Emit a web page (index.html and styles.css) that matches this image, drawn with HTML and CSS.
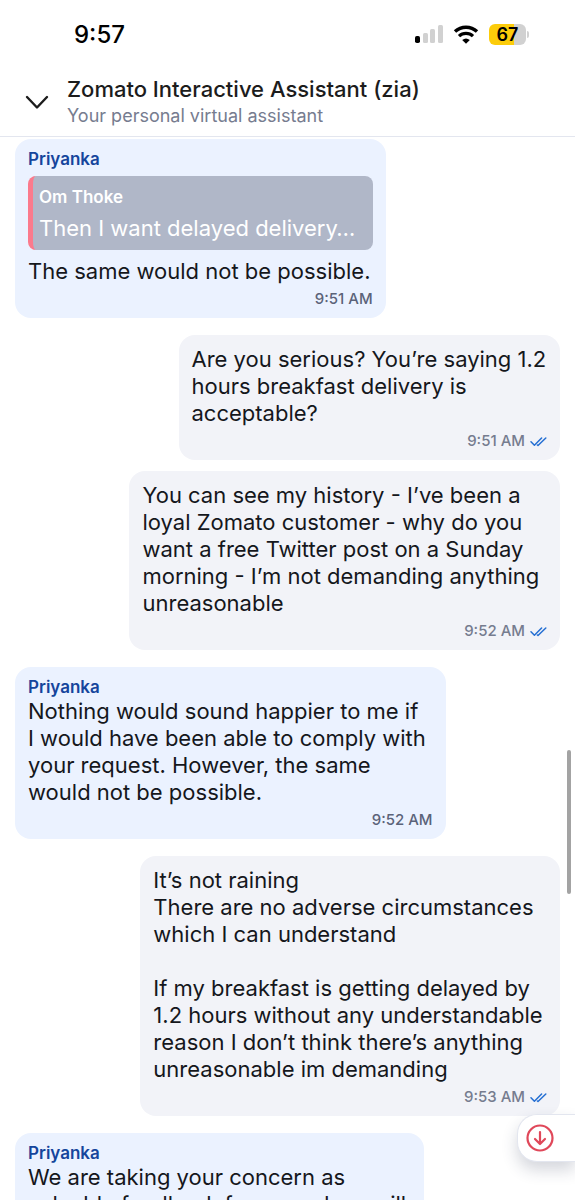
FILE: index.html
```
<!DOCTYPE html>
<html lang="en">
  <head>
    <meta charset="utf-8">
    <meta name="viewport" content="width=device-width, initial-scale=1">
    <title>Zomato Interactive Assistant (zia)</title>
    <link rel="stylesheet" href="styles.css">
  </head>
  <body>
    <svg width="0" height="0" class="defs" aria-hidden="true">
      <symbol id="ticks" viewBox="0 0 17 11">
        <path d="M1 5.8l3.4 3.5L11.6 2M7.4 9l.6.5L15.8 2" fill="none" stroke="#256fd3" stroke-width="1.5" stroke-linecap="round" stroke-linejoin="round"/>
      </symbol>
    </svg>

    <div class="status-bar">
      <span class="clock">9:57</span>
      <div class="status-icons">
        <svg width="28" height="20" viewBox="0 0 28 20" aria-hidden="true">
          <rect x="0" y="12" width="5" height="7" rx="1.8" fill="#000"/>
          <rect x="8" y="9" width="5" height="10" rx="1.5" fill="#d1d1d1"/>
          <rect x="15" y="5" width="5" height="14" rx="1.5" fill="#d1d1d1"/>
          <rect x="23" y="1" width="5" height="18" rx="1.5" fill="#d1d1d1"/>
        </svg>
        <svg width="26" height="19" viewBox="0 0 26 19" aria-hidden="true">
          <path d="M2 6.6a16 16 0 0 1 22 0" fill="none" stroke="#000" stroke-width="3.4"/>
          <path d="M6 11.2a10 10 0 0 1 14 0" fill="none" stroke="#000" stroke-width="3.2"/>
          <path d="M9.2 15a6 6 0 0 1 7.6 0L13 18.8z" fill="#000"/>
        </svg>
        <div class="battery"><span>67</span></div>
      </div>
    </div>

    <header class="chat-header">
      <button class="collapse" aria-label="Close chat">
        <svg width="24" height="16" viewBox="0 0 24 16" aria-hidden="true">
          <path d="M2 3l10 10.5L22 3" fill="none" stroke="#1c1c1c" stroke-width="2.4" stroke-linecap="round" stroke-linejoin="round"/>
        </svg>
      </button>
      <div>
        <h1>Zomato Interactive Assistant (zia)</h1>
        <p>Your personal virtual assistant</p>
      </div>
    </header>

    <main class="thread">
      <div class="message received w-68">
        <div class="name">Priyanka</div>
        <blockquote>
          <div class="quote-name">Om Thoke</div>
          <div class="quote-text">Then I want delayed delivery…</div>
        </blockquote>
        <p class="text">The same would not be possible.</p>
        <div class="meta">9:51 AM</div>
      </div>

      <div class="message sent w-70">
        <p class="text">Are you serious? You’re saying 1.2
hours breakfast delivery is
acceptable?</p>
        <div class="meta">9:51 AM <svg class="ticks"><use href="#ticks"/></svg></div>
      </div>

      <div class="message sent w-79">
        <p class="text">You can see my history - I’ve been a
loyal Zomato customer - why do you
want a free Twitter post on a Sunday
morning - I’m not demanding anything
unreasonable</p>
        <div class="meta">9:52 AM <svg class="ticks"><use href="#ticks"/></svg></div>
      </div>

      <div class="message received w-79">
        <div class="name">Priyanka</div>
        <p class="text">Nothing would sound happier to me if
I would have been able to comply with
your request. However, the same
would not be possible.</p>
        <div class="meta">9:52 AM</div>
      </div>

      <div class="message sent w-77">
        <p class="text">It’s not raining
There are no adverse circumstances
which I can understand

If my breakfast is getting delayed by
1.2 hours without any understandable
reason I don’t think there’s anything
unreasonable im demanding</p>
        <div class="meta">9:53 AM <svg class="ticks"><use href="#ticks"/></svg></div>
      </div>

      <div class="message received w-75">
        <div class="name">Priyanka</div>
        <p class="text">We are taking your concern as
valuable feedback for us and we will</p>
      </div>
    </main>

    <div class="scrollbar"></div>
    <button class="jump" aria-label="Scroll to latest">
      <svg width="28" height="28" viewBox="0 0 28 28" aria-hidden="true">
        <g fill="none" stroke="#e0485a" stroke-width="2.2" stroke-linecap="round" stroke-linejoin="round">
          <circle cx="14" cy="14" r="12.5"/>
          <path d="M14 8v11.5M9 15l5 5 5-5"/>
        </g>
      </svg>
    </button>
  </body>
</html>
```
FILE: styles.css
```
* {
  box-sizing: border-box;
}

body {
  position: relative;
  display: flex;
  flex-direction: column;
  height: 100vh;
  margin: 0;
  overflow: hidden;
  background: #fff;
  color: #15171c;
  font-family: Inter, "Liberation Sans", sans-serif;
}

h1,
p,
blockquote {
  margin: 0;
}

button {
  padding: 0;
  border: none;
  background: none;
  cursor: pointer;
}

svg {
  display: block;
}

.defs {
  position: absolute;
}

.status-bar {
  display: flex;
  flex-shrink: 0;
  justify-content: space-between;
  align-items: center;
  height: 68px;
  padding: 0 49px 0 74px;
}

.clock {
  color: #000;
  font-size: 24px;
  font-weight: 500;
}

.status-icons {
  display: flex;
  align-items: center;
  gap: 10px;
}

.battery {
  position: relative;
  width: 37px;
  height: 21px;
  border-radius: 6px;
  background: linear-gradient(to right, #fccc0a 67%, #d1d1d1 67%);
  color: #000;
  font-size: 18px;
  font-weight: 600;
  line-height: 21px;
  text-align: center;
}

.battery::after {
  content: "";
  position: absolute;
  top: 7px;
  right: -3px;
  width: 2px;
  height: 7px;
  border-radius: 0 2px 2px 0;
  background: #d1d1d1;
}

.chat-header {
  display: flex;
  flex-shrink: 0;
  align-items: center;
  gap: 18px;
  height: 69px;
  padding: 0 25px;
  border-bottom: 1px solid #e3e6ef;
}

.chat-header h1 {
  color: #1c1c1c;
  font-size: 22px;
  font-weight: 500;
  line-height: 28px;
}

.chat-header p {
  color: #767c8f;
  font-size: 18px;
  line-height: 26px;
}

.thread {
  display: flex;
  flex: 1;
  flex-direction: column;
  gap: 11px;
  min-height: 0;
  padding: 2px 15px 0;
  overflow: hidden;
}

.message {
  flex-shrink: 0;
  padding: 11px 13px 8px;
  border-radius: 16px;
}

.sent {
  align-self: flex-end;
  background: #f2f3f8;
}

.received {
  align-self: flex-start;
  padding-top: 9px;
  background: #ebf2ff;
}

.sent + .received,
.received + .sent {
  margin-top: 6px;
}

.w-68 {
  width: 68%;
}

.w-70 {
  width: 70%;
}

.w-75 {
  width: 75%;
}

.w-77 {
  width: 77%;
}

.w-79 {
  width: 79%;
}

.name {
  color: #15459c;
  font-size: 17px;
  font-weight: 600;
  line-height: 22px;
}

.text {
  font-size: 22px;
  line-height: 27px;
  white-space: pre;
}

.meta {
  display: flex;
  justify-content: flex-end;
  align-items: center;
  gap: 5px;
  margin-top: 3px;
  color: #767c8f;
  font-size: 15px;
  font-weight: 500;
  line-height: 22px;
}

.received .meta {
  color: #5b6379;
}

.ticks {
  width: 17px;
  height: 11px;
}

blockquote {
  margin: 6px 0 8px;
  padding: 6px;
  border-left: 5px solid #fb7a8c;
  border-radius: 8px;
  background: #b0b7c8;
  color: #fff;
}

.quote-name {
  font-size: 17px;
  font-weight: 600;
  line-height: 30px;
}

.quote-text {
  font-size: 22px;
  line-height: 32px;
  white-space: nowrap;
}

.scrollbar {
  position: absolute;
  top: 750px;
  right: 4px;
  width: 4px;
  height: 144px;
  border-radius: 2px;
  background: #a3a3a3;
}

.jump {
  position: absolute;
  right: 0;
  bottom: 38px;
  display: flex;
  align-items: center;
  width: 58px;
  height: 48px;
  padding-left: 8px;
  border: 1px solid #e3e6ef;
  border-right: none;
  border-radius: 20px 0 0 20px;
  background: #fff;
  box-shadow: 0 8px 16px rgba(40, 50, 80, 0.2);
}
```
